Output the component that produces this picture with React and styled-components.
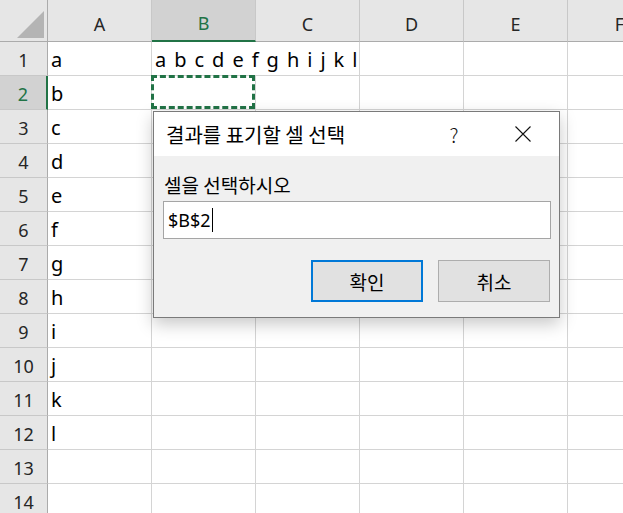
import React from "react";
import styled, { createGlobalStyle, css } from "styled-components";

const GlobalStyle = createGlobalStyle`
  html, body {
    margin: 0;
    padding: 0;
    background: #ffffff;
    overflow: hidden;
  }
  body {
    font-family: "Noto Sans", "Noto Sans CJK KR", sans-serif;
  }
`;

const GREEN = "#217346";

const Page = styled.div`
  position: relative;
  width: 623px;
  height: 513px;
  overflow: hidden;
  background: #ffffff;
`;

const Sheet = styled.div`
  display: grid;
  grid-template-columns: 48px repeat(6, 104px);
  grid-template-rows: 42px repeat(14, 34px);
  width: 672px;
`;

const Corner = styled.div`
  box-sizing: border-box;
  background: #e6e6e6;
  border-right: 1px solid #ababab;
  border-bottom: 1px solid #ababab;
  display: flex;
  align-items: flex-end;
  justify-content: flex-end;
  padding: 0 3px 3px 0;
`;

const ColHead = styled.div`
  box-sizing: border-box;
  background: ${(p) => (p.$active ? "#d2d2d2" : "#e6e6e6")};
  border-right: 1px solid #c8c8c8;
  border-bottom: ${(p) => (p.$active ? `2px solid ${GREEN}` : "1px solid #ababab")};
  color: ${(p) => (p.$active ? GREEN : "#262626")};
  font-size: 18px;
  display: flex;
  align-items: center;
  justify-content: center;
  padding-top: 6px;
`;

const RowHead = styled.div`
  box-sizing: border-box;
  background: ${(p) => (p.$active ? "#d2d2d2" : "#e6e6e6")};
  border-right: ${(p) => (p.$active ? `2px solid ${GREEN}` : "1px solid #ababab")};
  border-bottom: 1px solid #c8c8c8;
  color: ${(p) => (p.$active ? GREEN : "#262626")};
  font-size: 18px;
  display: flex;
  align-items: center;
  justify-content: center;
  padding-top: 2px;
`;

const Cell = styled.div`
  position: relative;
  box-sizing: border-box;
  border-right: 1px solid #d4d4d4;
  border-bottom: 1px solid #d4d4d4;
  font-size: 20px;
  word-spacing: 2.8px;
  color: #000;
  display: flex;
  align-items: center;
  padding: 2px 0 0 3px;
  white-space: nowrap;
  ${(p) => p.$span && css`grid-column: span ${p.$span};`}
  ${(p) =>
    p.$selected &&
    css`
      &::after {
        content: "";
        position: absolute;
        left: -1px;
        top: -1px;
        right: 0;
        bottom: 0;
        border: 3px dashed ${GREEN};
      }
    `}
`;

const Dialog = styled.div`
  position: absolute;
  left: 153px;
  top: 111px;
  width: 407px;
  box-sizing: border-box;
  border: 1px solid #7a7a7a;
  background: #f0f0f0;
  box-shadow: 0 6px 16px rgba(0, 0, 0, 0.22);
  font-family: "Noto Sans CJK KR", sans-serif;
`;

const TitleBar = styled.div`
  height: 44px;
  background: #ffffff;
  display: flex;
  align-items: center;
  padding-left: 12px;
  color: #000;
`;

const Title = styled.div`
  flex: 1;
  font-size: 20px;
`;

const TitleButton = styled.div`
  width: 46px;
  height: 44px;
  display: flex;
  align-items: center;
  justify-content: center;
  font-size: 20px;
  font-weight: 300;
  color: #111;
  margin-right: ${(p) => p.$mr || 0}px;
`;

const Body = styled.div`
  padding: 15px 8px 15px 9px;
  display: flex;
  flex-direction: column;
`;

const Label = styled.div`
  font-size: 19px;
  color: #000;
  margin-left: 1px;
  height: 28px;
  line-height: 28px;
`;

const Input = styled.div`
  margin-top: 2px;
  height: 38px;
  box-sizing: border-box;
  border: 1px solid #a5a5a5;
  background: #ffffff;
  display: flex;
  align-items: center;
  padding-left: 4px;
  font-family: "Noto Sans", "Noto Sans CJK KR", sans-serif;
  font-size: 18px;
  color: #000;
`;

const Caret = styled.span`
  display: inline-block;
  width: 1px;
  height: 24px;
  background: #000;
  margin-left: 1px;
`;

const Buttons = styled.div`
  display: flex;
  justify-content: flex-end;
  gap: 15px;
  margin: 21px 1px 0 0;
`;

const Button = styled.div`
  width: 112px;
  height: 42px;
  box-sizing: border-box;
  background: #e1e1e1;
  border: ${(p) => (p.$primary ? "2px solid #0078d7" : "1px solid #adadad")};
  display: flex;
  align-items: center;
  justify-content: center;
  font-size: 19px;
  color: #000;
`;

const cols = ["A", "B", "C", "D", "E", "F"];
const letters = "abcdefghijkl".split("");

export default function App() {
  const rows = [];
  for (let r = 1; r <= 14; r++) {
    rows.push(
      <RowHead key={`h${r}`} $active={r === 2}>
        {r}
      </RowHead>
    );
    rows.push(<Cell key={`a${r}`}>{letters[r - 1] || ""}</Cell>);
    if (r === 1) {
      rows.push(
        <Cell key={`b${r}`} $span={2}>
          a b c d e f g h i j k l
        </Cell>
      );
    } else {
      rows.push(<Cell key={`b${r}`} $selected={r === 2} />);
      rows.push(<Cell key={`c${r}`} />);
    }
    rows.push(<Cell key={`d${r}`} />);
    rows.push(<Cell key={`e${r}`} />);
    rows.push(<Cell key={`f${r}`} />);
  }

  return (
    <Page>
      <GlobalStyle />
      <Sheet>
        <Corner>
          <svg width="27" height="27" viewBox="0 0 27 27">
            <polygon points="0,27 27,27 27,0" fill="#b4b4b4" />
          </svg>
        </Corner>
        {cols.map((c) => (
          <ColHead key={c} $active={c === "B"}>
            {c}
          </ColHead>
        ))}
        {rows}
      </Sheet>

      <Dialog>
        <TitleBar>
          <Title>결과를 표기할 셀 선택</Title>
          <TitleButton $mr={23}>?</TitleButton>
          <TitleButton $mr={13}>
            <svg width="16" height="16" viewBox="0 0 16 16">
              <path d="M0.5 0.5 L15.5 15.5 M15.5 0.5 L0.5 15.5" stroke="#111" strokeWidth="1.1" fill="none" />
            </svg>
          </TitleButton>
        </TitleBar>
        <Body>
          <Label>셀을 선택하시오</Label>
          <Input>
            $B$2
            <Caret />
          </Input>
          <Buttons>
            <Button $primary>확인</Button>
            <Button>취소</Button>
          </Buttons>
        </Body>
      </Dialog>
    </Page>
  );
}
